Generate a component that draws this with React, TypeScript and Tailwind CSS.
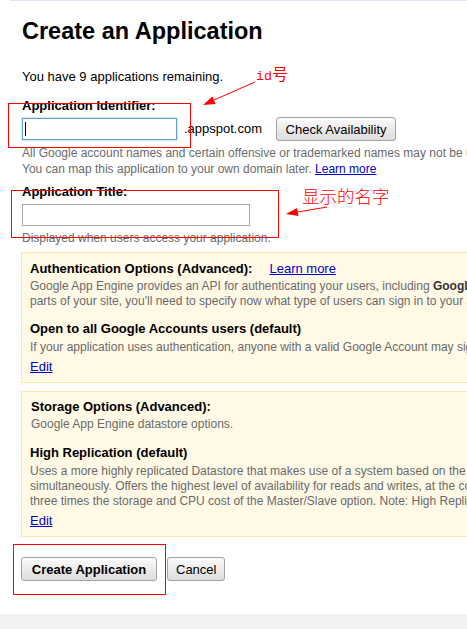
import React from 'react';

const gray = 'text-[#6b6b6b]';

function Btn({ children, bold, className }: { children: React.ReactNode; bold?: boolean; className?: string }) {
  return (
    <button
      className={`h-[24px] px-[8px] rounded-[3px] border border-[#a3a3a3] bg-gradient-to-b from-[#fbfbfb] to-[#dcdcdc] text-[13px] leading-none text-black ${bold ? 'font-bold' : ''} ${className ?? ''}`}
    >
      {children}
    </button>
  );
}

function Link({ children }: { children: React.ReactNode }) {
  return <span className="text-[#0000cc] underline">{children}</span>;
}

export default function App() {
  return (
    <div className="relative w-full min-h-[629px] overflow-hidden bg-white font-['Liberation_Sans',Arial,sans-serif] text-black">
      {/* top rule */}
      <div className="ml-[10px] h-px bg-[#e2e8f3]" />

      <div className="pl-[22px] flex flex-col items-start">
        <h1 className="mt-[16px] text-[23.5px] leading-[28px] font-bold">Create an Application</h1>

        <p className="mt-[24px] text-[13px] leading-[16px]">You have 9 applications remaining.</p>

        {/* identifier */}
        <label className="mt-[13px] text-[13px] leading-[16px] font-bold">Application Identifier:</label>
        <div className="mt-[3px] flex items-center">
          <div className="relative w-[155px] h-[22px] border border-[#5d9fd6] shadow-[0_0_2px_#8ec3ec] bg-white">
            <span className="absolute left-[2px] top-[3px] w-px h-[14px] bg-black" />
          </div>
          <span className="ml-[7px] text-[13px]">.appspot.com</span>
          <Btn className="ml-[14px] w-[120px] h-[23px]">Check Availability</Btn>
        </div>
        <div className={`mt-[4px] text-[12px] leading-[16px] whitespace-nowrap ${gray}`}>
          <div>All Google account names and certain offensive or trademarked names may not be used as Application Identifiers.</div>
          <div>
            You can map this application to your own domain later. <Link>Learn more</Link>
          </div>
        </div>

        {/* title */}
        <label className="mt-[7px] text-[13px] leading-[16px] font-bold">Application Title:</label>
        <input className="mt-[4px] w-[228px] h-[22px] border border-[#a9a9a9] outline-none" />
        <div className={`mt-[4px] text-[12px] leading-[16px] ${gray}`}>Displayed when users access your application.</div>

        {/* auth options */}
        <div className="mt-[6px] -ml-px w-[560px] border border-[#fbe9a3] bg-[#fff9e6] pl-[8px] pt-[8px] pb-[7px]">
          <div className="flex text-[13px] leading-[16px]">
            <span className="font-bold">Authentication Options (Advanced):</span>
            <span className="ml-[17px]">
              <Link>Learn more</Link>
            </span>
          </div>
          <div className={`mt-[2px] text-[12px] leading-[15px] whitespace-nowrap ${gray}`}>
            <div>
              Google App Engine provides an API for authenticating your users, including{' '}
              <span className="font-bold text-[#333]">Google Accounts</span>, Google Apps and OpenID. If you choose to use this feature for some
            </div>
            <div>parts of your site, you'll need to specify now what type of users can sign in to your application:</div>
          </div>
          <div className="mt-[12px] text-[13px] leading-[16px] font-bold">Open to all Google Accounts users (default)</div>
          <div className={`mt-[3px] text-[12px] leading-[15px] whitespace-nowrap ${gray}`}>
            If your application uses authentication, anyone with a valid Google Account may sign in to your application.
          </div>
          <div className="mt-[4px] text-[13px] leading-[16px]">
            <Link>Edit</Link>
          </div>
        </div>

        {/* storage options */}
        <div className="mt-[8px] -ml-px w-[560px] border border-[#fbe9a3] bg-[#fff9e6] pl-[9px] pt-[7px] pb-[7px]">
          <div className="text-[13px] leading-[16px] font-bold">Storage Options (Advanced):</div>
          <div className={`mt-[2px] text-[12px] leading-[15px] ${gray}`}>Google App Engine datastore options.</div>
          <div className="mt-[13px] -ml-px text-[13px] leading-[16px] font-bold">High Replication (default)</div>
          <div className={`mt-[3px] -ml-px text-[12px] leading-[15px] whitespace-nowrap ${gray}`}>
            <div>Uses a more highly replicated Datastore that makes use of a system based on the Paxos algorithm to synchronize data across multiple data centers</div>
            <div>simultaneously. Offers the highest level of availability for reads and writes, at the cost of higher latency writes and changes in consistency guarantees</div>
            <div>three times the storage and CPU cost of the Master/Slave option. Note: High Replication is required for some features.</div>
          </div>
          <div className="mt-[4px] -ml-px text-[13px] leading-[16px]">
            <Link>Edit</Link>
          </div>
        </div>

        {/* actions */}
        <div className="mt-[20px] -ml-px flex items-center gap-[10px]">
          <Btn bold className="w-[136px]">Create Application</Btn>
          <Btn className="w-[58px]">Cancel</Btn>
        </div>
      </div>

      <div className="mt-[33px] h-[16px] bg-[#f1f1f1]" />

      {/* red annotations */}
      <div className="absolute left-[8px] top-[103px] w-[183px] h-[45px] border border-[#ff0000] pointer-events-none" />
      <div className="absolute left-[11px] top-[190px] w-[268px] h-[48px] border border-[#ff0000] pointer-events-none" />
      <div className="absolute left-[13px] top-[544px] w-[153px] h-[51px] border border-[#ff0000] pointer-events-none" />

      <div className="absolute left-[256px] top-[63px] text-[#ff0000] leading-[20px] whitespace-nowrap">
        <span className="font-['Liberation_Mono',monospace] text-[13.3px]">id</span>
        <span className="font-['Noto_Sans_CJK_SC',sans-serif] text-[16px]">号</span>
      </div>
      <div className="absolute left-[302px] top-[185px] text-[#ff0000] text-[17.5px] leading-[22px] font-['Noto_Sans_CJK_SC',sans-serif] font-light whitespace-nowrap">
        显示的名字
      </div>

      <svg className="absolute left-0 top-0 pointer-events-none" width="467" height="629">
        <line x1="255" y1="82" x2="214" y2="100" stroke="#ff0000" strokeWidth="1" />
        <polygon points="203,105 212.4,96.5 215.6,103.9" fill="#ff0000" />
        <line x1="327" y1="207" x2="298" y2="212" stroke="#ff0000" strokeWidth="1" />
        <polygon points="286,214 297.1,208.1 298.5,215.9" fill="#ff0000" />
      </svg>
    </div>
  );
}
